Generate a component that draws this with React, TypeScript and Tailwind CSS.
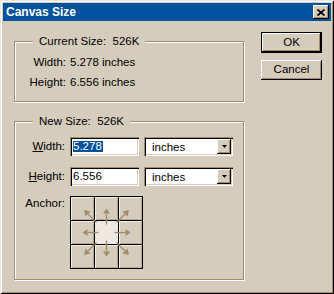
import React from "react";

const face = "bg-[#d5ccbb]";
const raised =
  "bg-[#d5ccbb] shadow-[inset_-1px_-1px_0_#000,inset_1px_1px_0_#fff,inset_-2px_-2px_0_#a28d68]";
const sunken =
  "bg-white shadow-[inset_1px_1px_0_#a28d68,inset_2px_2px_0_#000,inset_-1px_-1px_0_#fff,inset_-2px_-2px_0_#d5ccbb]";
const groove =
  "border border-[#a28d68] shadow-[inset_1px_1px_0_#fff,1px_1px_0_#fff]";

function Legend({ children }: { children: React.ReactNode }) {
  return (
    <div className={`absolute left-[18px] -top-[8px] px-[6px] leading-[14px] whitespace-pre ${face}`}>
      {children}
    </div>
  );
}

function Combo({ value }: { value: string }) {
  return (
    <div className={`w-[89px] h-[19px] flex items-stretch p-[2px] ${sunken}`}>
      <div className="flex-1 pl-[6px] flex items-center leading-[12px]">{value}</div>
      <div className={`w-[14px] flex items-center justify-center ${raised}`}>
        <svg width="5" height="3" viewBox="0 0 5 3">
          <polygon points="0,0 5,0 2.5,3" fill="#000" />
        </svg>
      </div>
    </div>
  );
}

function Arrows() {
  const c = 36.5;
  const dirs = [
    [-1, -1], [0, -1], [1, -1],
    [-1, 0], [1, 0],
    [-1, 1], [0, 1], [1, 1],
  ];
  return (
    <svg className="absolute inset-0" width="73" height="73" viewBox="0 0 73 73">
      {dirs.map(([dx, dy], i) => {
        const diag = dx !== 0 && dy !== 0;
        const s = diag ? 10 : 8;
        const b = diag ? 18.5 : 19;
        const t = diag ? 22.5 : 24;
        const px = -dy * (diag ? 2.6 : 3.5);
        const py = dx * (diag ? 2.6 : 3.5);
        const bx = c + dx * b;
        const by = c + dy * b;
        return (
          <g key={i} fill="#a28d68" stroke="#a28d68">
            <line x1={c + dx * s} y1={c + dy * s} x2={bx} y2={by} strokeWidth="1.3" />
            <polygon
              stroke="none"
              points={`${c + dx * t},${c + dy * t} ${bx + px},${by + py} ${bx - px},${by - py}`}
            />
          </g>
        );
      })}
    </svg>
  );
}

export default function App() {
  return (
    <div
      className={`w-[334px] h-[294px] text-black text-[11.5px] ${face} shadow-[inset_1px_1px_0_#ece6da,inset_-1px_-1px_0_#000,inset_2px_2px_0_#fff,inset_-2px_-2px_0_#a28d68]`}
      style={{ fontFamily: '"Liberation Sans", Arial, sans-serif' }}
    >
      <div className="mx-[3px] pt-[3px]">
        <div className="h-[18px] bg-[#00529c] flex items-center justify-between pl-[3px] pr-[2px]">
          <span className="text-white font-bold text-[12px] leading-none">Canvas Size</span>
          <div className={`w-[16px] h-[14px] flex items-center justify-center ${raised}`}>
            <svg width="8" height="7" viewBox="0 0 8 7">
              <path d="M0.5 0.5 L7.5 6.5 M7.5 0.5 L0.5 6.5" stroke="#000" strokeWidth="1.8" />
            </svg>
          </div>
        </div>
      </div>

      <div className="flex">
        <div className="ml-[14px] w-[230px]">
          <div className={`relative mt-[20px] h-[61px] ${groove}`}>
            <Legend>Current Size:  526K</Legend>
            <div className="pt-[11px] grid grid-cols-[51px_1fr] gap-x-[4px]">
              <div className="h-[20px] flex items-center justify-end">Width:</div>
              <div className="h-[20px] flex items-center">5.278 inches</div>
              <div className="h-[20px] flex items-center justify-end">Height:</div>
              <div className="h-[20px] flex items-center">6.556 inches</div>
            </div>
          </div>

          <div className={`relative mt-[19px] h-[159px] ${groove}`}>
            <Legend>New Size:  526K</Legend>
            <div className="pt-[15px] grid grid-cols-[50px_1fr] gap-x-[5px]">
              <div className="h-[19px] flex items-center justify-end">
                <span>
                  <span className="underline">W</span>idth:
                </span>
              </div>
              <div className="flex gap-[5px]">
                <div className={`w-[69px] h-[19px] flex items-center pl-[3px] ${sunken}`}>
                  <span className="bg-[#00529c] text-white leading-[11px] pr-[1px]">5.278</span>
                </div>
                <Combo value="inches" />
              </div>

              <div className="mt-[11px] h-[19px] flex items-center justify-end">
                <span>
                  <span className="underline">H</span>eight:
                </span>
              </div>
              <div className="mt-[11px] flex gap-[5px]">
                <div className={`w-[69px] h-[19px] flex items-center pl-[3px] ${sunken}`}>
                  <span className="leading-[11px]">6.556</span>
                </div>
                <Combo value="inches" />
              </div>

              <div className="mt-[10px] leading-[14px] text-right">Anchor:</div>
              <div className="mt-[10px]">
                <div className="relative w-[73px] h-[73px] bg-black p-px grid grid-cols-3 gap-px">
                  {Array.from({ length: 9 }).map((_, i) => (
                    <div
                      key={i}
                      className={
                        i === 4
                          ? "bg-[#ede9e1]"
                          : "bg-[#d5ccbb] shadow-[inset_1px_1px_0_#f4f0e8,inset_-1px_-1px_0_#b8aa90]"
                      }
                    />
                  ))}
                  <Arrows />
                </div>
              </div>
            </div>
          </div>
        </div>

        <div className="ml-[17px] mt-[11px] flex flex-col">
          <div className="w-[61px] h-[21px] bg-black p-px">
            <div className={`w-full h-full flex items-center justify-center ${raised}`}>OK</div>
          </div>
          <div className={`mt-[7px] w-[61px] h-[20px] flex items-center justify-center ${raised}`}>
            Cancel
          </div>
        </div>
      </div>
    </div>
  );
}
